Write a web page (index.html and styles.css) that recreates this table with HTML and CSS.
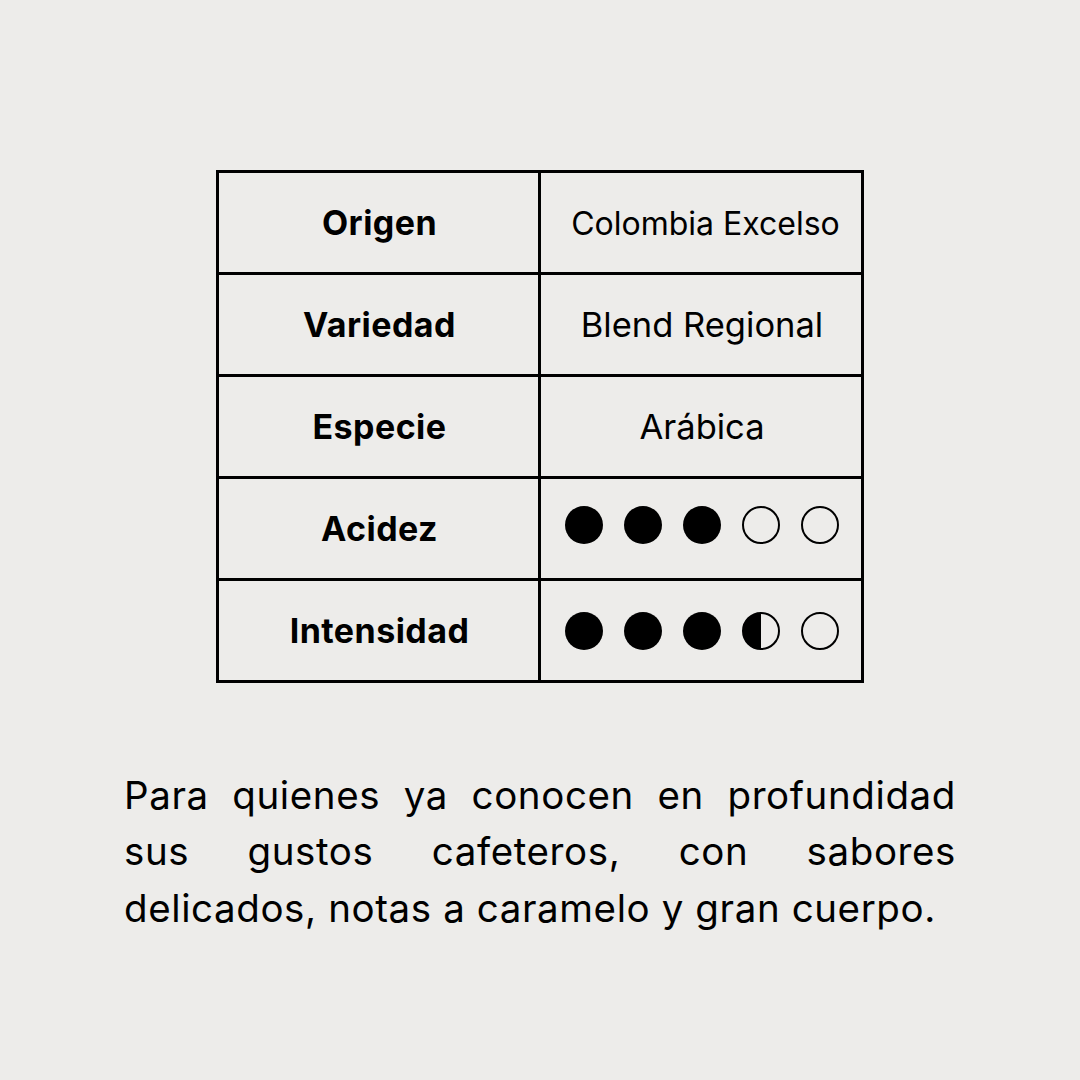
FILE: index.html
```html
<!DOCTYPE html>
<html lang="es">
<head>
<meta charset="utf-8">
<link rel="stylesheet" href="styles.css">
</head>
<body>
<main class="page">
  <div class="specs">
    <div class="label">Origen</div><div class="value small">Colombia Excelso</div>
    <div class="label">Variedad</div><div class="value">Blend Regional</div>
    <div class="label">Especie</div><div class="value">Arábica</div>
    <div class="label">Acidez</div>
    <div class="value">
      <div class="dots up">
        <span class="dot full"></span><span class="dot full"></span><span class="dot full"></span><span class="dot empty"></span><span class="dot empty"></span>
      </div>
    </div>
    <div class="label">Intensidad</div>
    <div class="value">
      <div class="dots">
        <span class="dot full"></span><span class="dot full"></span><span class="dot full"></span><span class="dot half"></span><span class="dot empty"></span>
      </div>
    </div>
  </div>
  <p class="desc">Para quienes ya conocen en profundidad sus gustos cafeteros, con sabores delicados, notas a caramelo y gran cuerpo.</p>
</main>
</body>
</html>
```
FILE: styles.css
```css
html, body {
  margin: 0;
  padding: 0;
  background: #EDECEA;
}
body {
  font-family: Inter, "Noto Sans", sans-serif;
  color: #000;
}
.page {
  width: 1080px;
  height: 1080px;
  display: flex;
  flex-direction: column;
  align-items: center;
  padding-top: 170px;
  box-sizing: border-box;
}
.specs {
  display: grid;
  grid-template-columns: 322px 323px;
  grid-auto-rows: 102px;
  border-top: 3px solid #000;
  border-left: 3px solid #000;
}
.label, .value {
  border-right: 3px solid #000;
  border-bottom: 3px solid #000;
  display: flex;
  align-items: center;
  justify-content: center;
}
.label {
  font-weight: 700;
  font-size: 34px;
  letter-spacing: 0.45px;
  padding-left: 2px;
}
.value {
  font-weight: 400;
  font-size: 34.5px;
  padding-left: 2px;
}
.value.small {
  font-size: 32px;
  padding-left: 9px;
  padding-top: 2px;
}
.dots {
  display: flex;
  gap: 21px;
  padding-top: 1px;
}
.dots.up {
  padding-top: 0;
  margin-top: -7px;
}
.dot {
  width: 38px;
  height: 38px;
  border-radius: 50%;
  box-sizing: border-box;
}
.dot.full {
  background: #000;
}
.dot.empty {
  border: 2px solid #000;
}
.dot.half {
  border: 2px solid #000;
  background: linear-gradient(to right, #000 50%, transparent 50%);
}
.desc {
  width: 832px;
  margin: 84px 0 0;
  font-size: 38.5px;
  line-height: 56.3px;
  text-align: justify;
  letter-spacing: 0.6px;
}
```
